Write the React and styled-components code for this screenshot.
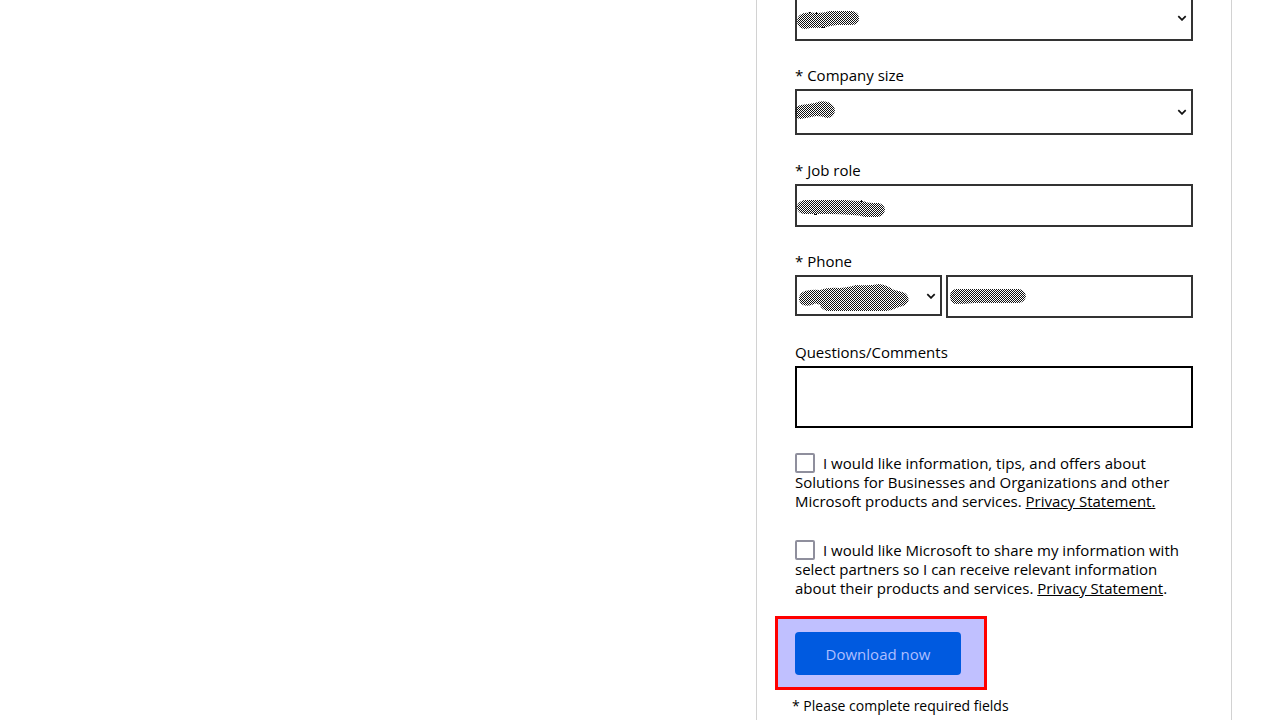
import React from "react";
import styled, { createGlobalStyle } from "styled-components";

const GlobalStyle = createGlobalStyle`
  *, *::before, *::after { box-sizing: border-box; }
  body {
    margin: 0;
    background: #fff;
    color: #000;
    font-family: "Open Sans", "Noto Sans", sans-serif;
    font-size: 15px;
    line-height: 20px;
  }
`;

const Page = styled.main`
  display: flex;
  justify-content: flex-end;
  padding: 0 48px;
  height: 100vh;
  overflow: hidden;
`;

const Card = styled.form`
  flex: 0 1 476px;
  min-height: 100%;
  padding: 0 38px;
  border: solid #d2d2d2;
  border-width: 0 1px;
`;

const FieldGroup = styled.div`
  display: flex;
  flex-direction: column;
  gap: 24px;
  margin-top: ${(p) => p.$top}px;
`;

const Field = styled.div`
  display: flex;
  flex-direction: column;
  gap: 4px;
`;

const Columns = styled.div`
  display: grid;
  grid-template-columns: 147px 1fr;
  align-items: start;
  gap: 4px;
`;

const Control = styled.div`
  position: relative;
  display: grid;
`;

const Select = styled.select`
  appearance: none;
  width: 100%;
  height: ${(p) => p.$height}px;
  padding: 0 24px 0 4px;
  border: 2px solid #333;
  border-radius: 0;
  background: #fff;
  font: inherit;
`;

const TextInput = styled.input`
  width: 100%;
  height: 43px;
  padding: 0 4px;
  border: 2px solid #333;
  border-radius: 0;
  background: #fff;
  font: inherit;
`;

const TextArea = styled.textarea`
  display: block;
  width: 100%;
  height: 62px;
  border: 2px solid #000;
  border-radius: 0;
  background: #fff;
  resize: none;
  font: inherit;
`;

const Chevron = styled.svg`
  position: absolute;
  top: 50%;
  right: 6px;
  width: 10px;
  height: 6px;
  margin-top: -3px;
  pointer-events: none;
`;

const Scribble = styled.svg`
  position: absolute;
  top: 0;
  left: 0;
  width: 120px;
  height: 43px;
  pointer-events: none;
`;

const Consent = styled.p`
  margin: ${(p) => p.$top}px 0 0;
  line-height: 19px;
`;

const Checkbox = styled.input`
  appearance: none;
  width: 20px;
  height: 20px;
  margin: -4px 8px 0 0;
  border: 2px solid #8f8f9d;
  border-radius: 2px;
  background: #fff;
  vertical-align: middle;
`;

const Link = styled.a`
  color: inherit;
  text-decoration: underline;
`;

const Highlight = styled.div`
  width: fit-content;
  margin: 18px 0 0 -20px;
  padding: 13px 23px 12px 17px;
  border: 3px solid #f00;
  background: #c0c0ff;
`;

const Button = styled.button`
  display: block;
  width: 166px;
  height: 43px;
  padding: 0;
  border: 0;
  border-radius: 4px;
  background: #005ae0;
  color: #aebfff;
  font: inherit;
`;

const Note = styled.p`
  margin: 6px 0 0 -3px;
  font-size: 14px;
`;

function Arrow() {
  return (
    <Chevron viewBox="0 0 10 6" aria-hidden="true">
      <path d="M1.3 1.2 5 4.9 8.7 1.2" fill="none" stroke="#111" strokeWidth="1.7" />
    </Chevron>
  );
}

function Redaction({ id, d, specks }) {
  return (
    <Scribble viewBox="0 0 120 43" aria-hidden="true">
      <defs>
        <pattern id={id} width="2" height="2" patternUnits="userSpaceOnUse">
          <path d="M0 0h1v1H0zM1 1h1v1H1z" fill="#111" shapeRendering="crispEdges" />
        </pattern>
      </defs>
      <path d={d} fill={`url(#${id})`} />
      {specks && <path d={specks} fill="#111" />}
    </Scribble>
  );
}

export default function App() {
  return (
    <>
      <GlobalStyle />
      <Page>
        <Card onSubmit={(e) => e.preventDefault()}>
          <FieldGroup $top={-5}>
            <Control>
              <Select $height={46} aria-label="Country" />
              <Redaction
                id="dots-country"
                d="M9 18Q15 17 22 18Q29 18 35 16H57Q64 17 64 23Q64 30 57 30H42Q34 31 27 33Q18 32 10 34Q2 33 2 26Q2 20 9 18Z"
                specks="M14 17h2v1h-2zM21 17h1v2h-1zM26 32h4v1h-4z"
              />
              <Arrow />
            </Control>
            <Field>
              <label htmlFor="size">* Company size</label>
              <Control>
                <Select id="size" $height={46} />
                <Redaction
                  id="dots-size"
                  d="M6 16Q14 15 20 14Q26 11 33 13Q40 16 40 22Q39 29 32 29Q27 27 21 27Q12 29 5 30Q0 29 0 23Q0 17 6 16Z"
                />
                <Arrow />
              </Control>
            </Field>
          </FieldGroup>

          <FieldGroup $top={25}>
            <Field>
              <label htmlFor="role">* Job role</label>
              <Control>
                <TextInput id="role" type="text" />
                <Redaction
                  id="dots-role"
                  d="M9 16H50Q60 17 68 17Q72 19 78 19H84Q90 21 90 26Q89 32 83 33H70Q64 31 57 31Q45 30 35 30H9Q2 29 2 23Q2 18 9 16Z"
                  specks="M66 16h1v2h-1zM19 30h3v1h-3z"
                />
              </Control>
            </Field>
            <Field>
              <label htmlFor="phone">* Phone</label>
              <Columns>
                <Control>
                  <Select $height={41} aria-label="Country code" />
                  <Redaction
                    id="dots-code"
                    d="M10 16Q18 14 25 15Q33 12 45 13Q55 12 61 10Q75 11 84 9Q92 10 99 15Q105 16 110 18Q115 22 113 27Q111 31 104 32Q98 35 91 36H32Q26 34 25 30Q20 27 17 30Q10 32 6 29Q2 24 6 18Z"
                  />
                  <Arrow />
                </Control>
                <Control>
                  <TextInput id="phone" type="tel" />
                  <Redaction
                    id="dots-phone"
                    d="M10 14H73Q79 15 80 21Q79 27 73 28H28Q19 29 9 29Q4 27 4 21Q4 15 10 14Z"
                  />
                </Control>
              </Columns>
            </Field>
            <Field>
              <label htmlFor="comments">Questions/Comments</label>
              <TextArea id="comments" />
            </Field>
          </FieldGroup>

          <Consent $top={26}>
            <Checkbox id="offers" type="checkbox" />
            <label htmlFor="offers">
              I would like information, tips, and offers about Solutions for Businesses and
              Organizations and other Microsoft products and services.
            </label>{" "}
            <Link href="#privacy">Privacy Statement.</Link>
          </Consent>
          <Consent $top={30}>
            <Checkbox id="share" type="checkbox" />
            <label htmlFor="share">
              I would like Microsoft to share my information with select partners so I can
              receive relevant information about their products and services.
            </label>{" "}
            <Link href="#privacy">Privacy Statement</Link>.
          </Consent>

          <Highlight>
            <Button type="submit">Download now</Button>
          </Highlight>
          <Note>* Please complete required fields</Note>
        </Card>
      </Page>
    </>
  );
}
